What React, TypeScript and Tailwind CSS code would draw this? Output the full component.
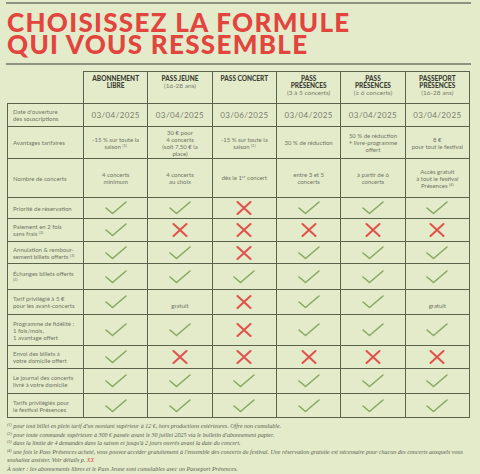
import React from 'react';

type Mark = 'y' | 'n' | string;

const Check = () => (
  <svg width="22" height="14" viewBox="0 0 22 14" className="mx-auto block">
    <path d="M1 7 L7.5 12.5 L21 1" fill="none" stroke="#8aa862" strokeWidth="1.6" strokeLinecap="round" strokeLinejoin="round" />
  </svg>
);

const Cross = () => (
  <svg width="16" height="14" viewBox="0 0 16 14" className="mx-auto block">
    <path d="M1.5 1 L14.5 13 M14.5 1 L1.5 13" fill="none" stroke="#e2504a" strokeWidth="2" strokeLinecap="round" />
  </svg>
);

const Sup = ({ n }: { n: string }) => <span className="relative -top-[2px] text-[4px] leading-[4px]">({n})</span>;

const textRows: { label: React.ReactNode; h: string; cells: React.ReactNode[]; date?: boolean }[] = [
  {
    label: <>Date d'ouverture<br />des souscriptions</>,
    h: 'h-[23px]',
    date: true,
    cells: ['03/04/2025', '03/04/2025', '03/06/2025', '03/04/2025', '03/04/2025', '03/04/2025'],
  },
  {
    label: 'Avantages tarifaires',
    h: 'h-[32px]',
    cells: [
      <>-15 % sur toute la<br />saison <Sup n="1" /></>,
      <>30 € pour<br />4 concerts<br />(soit 7,50 € la<br />place)</>,
      <>-15 % sur toute la<br />saison <Sup n="1" /></>,
      '30 % de réduction',
      <>50 % de réduction<br />+ livre-programme<br />offert</>,
      <>8 €<br />pour tout le festival</>,
    ],
  },
  {
    label: 'Nombre de concerts',
    h: 'h-[39px]',
    cells: [
      <>4 concerts<br />minimum</>,
      <>4 concerts<br />au choix</>,
      <>dès le 1<span className="relative -top-[2px] text-[4px]">er</span> concert</>,
      <>entre 3 et 5<br />concerts</>,
      <>à partir de 6<br />concerts</>,
      <>Accès gratuit<br />à tout le festival<br />Présences <Sup n="4" /></>,
    ],
  },
];

const markRows: { label: React.ReactNode; h: string; marks: Mark[] }[] = [
  { label: 'Priorité de réservation', h: 'h-[21px]', marks: ['y', 'y', 'n', 'y', 'y', 'y'] },
  { label: <>Paiement en 2 fois<br />sans frais <Sup n="2" /></>, h: 'h-[23px]', marks: ['y', 'n', 'n', 'n', 'n', 'n'] },
  { label: <>Annulation &amp; rembour-<br />sement billets offerts <Sup n="3" /></>, h: 'h-[22px]', marks: ['y', 'y', 'n', 'y', 'y', 'y'] },
  { label: <>Échanges billets offerts<br /><Sup n="3" /></>, h: 'h-[26px]', marks: ['y', 'y', 'y', 'y', 'y', 'y'] },
  { label: <>Tarif privilégié à 5 €<br />pour les avant-concerts</>, h: 'h-[24px]', marks: ['y', 'gratuit', 'n', 'y', 'y', 'gratuit'] },
  { label: <>Programme de fidélité :<br />1 fois/mois,<br />1 avantage offert</>, h: 'h-[31px]', marks: ['y', 'y', 'n', 'y', 'y', 'y'] },
  { label: <>Envoi des billets à<br />votre domicile offert</>, h: 'h-[23px]', marks: ['y', 'n', 'n', 'n', 'n', 'n'] },
  { label: <>Le journal des concerts<br />livré à votre domicile</>, h: 'h-[25px]', marks: ['y', 'y', 'y', 'y', 'y', 'y'] },
  { label: <>Tarifs privilégiés pour<br />le festival Présences</>, h: 'h-[24px]', marks: ['y', 'y', 'y', 'y', 'y', 'y'] },
];

const headers: { title: React.ReactNode; sub?: string }[] = [
  { title: <>ABONNEMENT<br />LIBRE</> },
  { title: 'PASS JEUNE', sub: '(16-28 ans)' },
  { title: 'PASS CONCERT' },
  { title: <>PASS<br />PRÉSENCES</>, sub: '(3 à 5 concerts)' },
  { title: <>PASS<br />PRÉSENCES</>, sub: '(≥ 6 concerts)' },
  { title: <>PASSEPORT<br />PRÉSENCES</>, sub: '(16-28 ans)' },
];

const cell = 'border border-[#59624a] text-center align-middle px-[2px]';
const labelCell = 'border border-[#59624a] text-left align-middle pl-[5px] pr-[2px] text-[6px] leading-[7px] text-[#727664]';

export default function App() {
  return (
    <div className="w-[480px] h-[474px] bg-[#e3ebcb] px-[6px] pt-[2px] overflow-hidden" style={{ fontFamily: 'Lato, "Noto Sans", sans-serif' }}>
      <div className="w-[465px] h-[2px] bg-[#8c9380]" />
      <h1 className="pl-[1px] pt-[7px] pb-[8px] text-[26px] leading-[22px] font-black tracking-[1.3px] text-[#e2443e]">
        CHOISISSEZ LA FORMULE
        <br />
        QUI VOUS RESSEMBLE
      </h1>
      <div className="w-[465px] h-[2px] bg-[#8c9380]" />

      <table className="mt-[6px] ml-[1px] w-[463px] border-collapse table-fixed">
        <colgroup>
          <col className="w-[76px]" />
          <col />
          <col />
          <col />
          <col />
          <col />
          <col />
        </colgroup>
        <thead>
          <tr className="h-[32px]">
            <th className="border-0 border-b border-[#59624a]" />
            {headers.map((hd, i) => (
              <th key={i} className={`${cell} align-top pt-[3px]`}>
                <div className="text-[6.5px] leading-[7px] font-black text-[#3e3f34]">{hd.title}</div>
                {hd.sub && <div className="text-[6.5px] leading-[7px] font-normal text-[#7a7c6a]">{hd.sub}</div>}
              </th>
            ))}
          </tr>
        </thead>
        <tbody>
          {textRows.map((r, i) => (
            <tr key={i} className={r.h}>
              <td className={labelCell}>{r.label}</td>
              {r.cells.map((c, j) => (
                <td
                  key={j}
                  className={`${cell} ${r.date ? 'text-[8px] tracking-[0.4px] text-[#7a7c6a]' : 'text-[6px] leading-[7px] text-[#727664]'}`}
                >
                  {c}
                </td>
              ))}
            </tr>
          ))}
          {markRows.map((r, i) => (
            <tr key={i} className={r.h}>
              <td className={labelCell}>{r.label}</td>
              {r.marks.map((m, j) => (
                <td key={j} className={cell}>
                  {m === 'y' ? <Check /> : m === 'n' ? <Cross /> : <span className="text-[6px] text-[#727664]">{m}</span>}
                </td>
              ))}
            </tr>
          ))}
        </tbody>
      </table>

      <div
        className="mt-[4px] ml-[1px] text-[6px] leading-[8.5px] italic text-[#5d604f]"
        style={{ fontFamily: '"Liberation Serif", serif' }}
      >
        <p><Sup n="1" /> pour tout billet en plein tarif d'un montant supérieur à 12 €, hors productions extérieures. Offre non cumulable.</p>
        <p><Sup n="2" /> pour toute commande supérieure à 300 € passée avant le 30 juillet 2025 via le bulletin d'abonnement papier.</p>
        <p><Sup n="3" /> dans la limite de 4 demandes dans la saison et jusqu'à 2 jours ouvrés avant la date du concert.</p>
        <p>
          <Sup n="4" /> une fois le Pass Présences acheté, vous pouvez accéder gratuitement à l'ensemble des concerts du festival. Une réservation gratuite est nécessaire pour chacun des concerts auxquels vous
          souhaitez assister. Voir détails p. <span className="text-[#e2443e]">XX</span>
        </p>
        <p>À noter : les abonnements libres et le Pass Jeune sont cumulables avec un Passeport Présences.</p>
      </div>
    </div>
  );
}
